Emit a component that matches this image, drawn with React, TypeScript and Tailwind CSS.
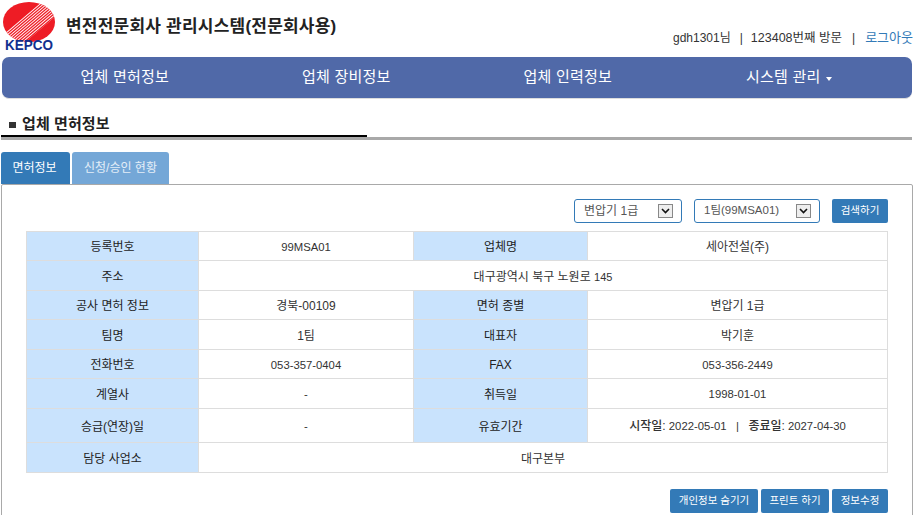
const font = "font-['Liberation_Sans','Noto_Sans_CJK_KR',sans-serif]";

const navItems = ["업체 면허정보", "업체 장비정보", "업체 인력정보", "시스템 관리"];

type Cell = { label: string; value: React.ReactNode; latin?: boolean };
type Row = { h: string; cells: Cell[] };

const rows: Row[] = [
  { h: "h-[29px]", cells: [{ label: "등록번호", value: "99MSA01", latin: true }, { label: "업체명", value: "세아전설(주)" }] },
  { h: "h-[30px]", cells: [{ label: "주소", value: <>대구광역시 북구 노원로 <span className="text-[11px]">145</span></> }] },
  { h: "h-[29px]", cells: [{ label: "공사 면허 정보", value: "경북-00109" }, { label: "면허 종별", value: "변압기 1급" }] },
  { h: "h-[30px]", cells: [{ label: "팀명", value: "1팀" }, { label: "대표자", value: "박기훈" }] },
  { h: "h-[29px]", cells: [{ label: "전화번호", value: "053-357-0404", latin: true }, { label: "FAX", value: "053-356-2449", latin: true }] },
  { h: "h-[30px]", cells: [{ label: "계열사", value: "-", latin: true }, { label: "취득일", value: "1998-01-01", latin: true }] },
  {
    h: "h-[34px]",
    cells: [
      { label: "승급(연장)일", value: "-", latin: true },
      {
        label: "유효기간",
        value: (
          <span className="relative -top-[1px] text-[11.3px]">
            <span className="text-[12px] font-medium">시작일:</span> 2022-05-01{"   |   "}
            <span className="text-[12px] font-medium">종료일:</span> 2027-04-30
          </span>
        ),
      },
    ],
  },
  { h: "h-[30px]", cells: [{ label: "담당 사업소", value: "대구본부" }] },
];

function Logo() {
  const stripes = [0, 1, 2, 3, 4, 5, 6, 7, 8];
  return (
    <svg width="54" height="52" viewBox="0 0 54 52" className="shrink-0">
      <defs>
        <clipPath id="disc">
          <ellipse cx="26" cy="20" rx="26" ry="20" />
        </clipPath>
      </defs>
      <ellipse cx="26" cy="20" rx="26" ry="20" fill="#ee1c25" />
      <g clipPath="url(#disc)">
        <path d="M0 33L60 -18L60 8L0 59Z" fill="#fff" />
        <g stroke="#ee1c25" strokeWidth="1.3">
          {stripes.map((i) => (
            <line key={i} x1={0} y1={35 + i * 2.9} x2={60} y2={-16 + i * 2.9} />
          ))}
        </g>
      </g>
      <text x="2" y="48" fill="#12308f" fontSize="15" fontWeight="700" fontFamily="Liberation Sans" textLength="48" lengthAdjust="spacingAndGlyphs">
        KEPCO
      </text>
    </svg>
  );
}

function SelectBox({ label, w, size }: { label: string; w: string; size: string }) {
  return (
    <div className={`${w} ${size} flex h-6 items-center justify-between rounded-[3px] border border-[#337ab7] pl-[9px] pr-[8px] text-[#555]`}>
      <span>{label}</span>
      <span className="flex h-[14px] w-[15px] items-center justify-center border border-[#888] bg-[#eee]">
        <svg width="9" height="6" viewBox="0 0 9 6">
          <path d="M1 1l3.5 3.5L8 1" fill="none" stroke="#111" strokeWidth="1.6" />
        </svg>
      </span>
    </div>
  );
}

function Btn({ children, w }: { children: string; w: string }) {
  return (
    <button className={`${w} flex h-6 items-center justify-center rounded-[2px] bg-[#337ab7] text-[10.5px] text-white`}>
      {children}
    </button>
  );
}

export default function App() {
  return (
    <div className={`${font} h-[515px] w-[915px] overflow-hidden bg-white text-[#333]`}>
      <header className="flex h-[57px] items-start pl-[3px] pr-[2px] pt-[2px]">
        <Logo />
        <h1 className="ml-[9px] mt-[15px] text-[17px] font-bold leading-5 tracking-[0.22px] text-[#222]">
          변전전문회사 관리시스템(전문회사용)
        </h1>
        <div className="ml-auto mt-[28px] flex text-[12px] leading-4">
          <span>gdh1301님</span>
          <span className="ml-[9px]">|</span>
          <span className="ml-[8px] text-[12.5px]">123408번째 방문</span>
          <span className="ml-[10px]">|</span>
          <span className="ml-[10px] text-[13px] text-[#337ab7]">로그아웃</span>
        </div>
      </header>

      <nav className="mx-[2px] grid h-[42px] w-[910px] grid-cols-4 rounded-[7px] border-b border-[#ddd] bg-[#5069a8] px-3 text-[15px] tracking-[0.2px] text-white">
        {navItems.map((item, i) => (
          <div key={item} className="flex items-center justify-center gap-[6px]">
            {item}
            {i === 3 && <span className="mt-[2px] border-x-[3.5px] border-t-[4px] border-x-transparent border-t-white" />}
          </div>
        ))}
      </nav>

      <div className="ml-[1px] mt-[14px] flex h-[24px] w-[366px] items-center border-b-2 border-black pl-[8px] text-[15px] font-bold tracking-[0.1px] text-[#222]">
        <span className="mr-[6px] mt-[2px] h-[6px] w-[7px] bg-[#333]" />
        업체 면허정보
      </div>
      <div className="mx-[1px] h-[3px] w-[911px] bg-[#a9a9a9]" />

      <div className="ml-[1px] mt-[12px] flex gap-[2px] text-[12px] text-white">
        <div className="flex h-[32px] w-[69px] items-center justify-center rounded-t-[3px] bg-[#337ab7] pr-[2px]">면허정보</div>
        <div className="flex h-[32px] w-[97px] items-center justify-center rounded-t-[3px] bg-[#74a7d7] text-[#e4eef8]">신청/승인 현황</div>
      </div>

      <section className="ml-[1px] h-[340px] w-[912px] rounded-[2px] border border-[#a9a9a9] px-[24px] pt-[14px]">
        <div className="flex w-[862px] justify-end gap-3">
          <SelectBox label="변압기 1급" w="w-[108px]" size="text-[12px]" />
          <SelectBox label="1팀(99MSA01)" w="w-[126px]" size="text-[11.5px]" />
          <Btn w="w-[56px]">검색하기</Btn>
        </div>

        <table className="mt-2 w-[861px] table-fixed border-collapse text-[12px]">
          <colgroup>
            <col className="w-[172px]" />
            <col className="w-[215px]" />
            <col className="w-[174px]" />
            <col className="w-[300px]" />
          </colgroup>
          <tbody>
            {rows.map((r) => (
              <tr key={r.cells[0].label} className={r.h}>
                {r.cells.flatMap((c) => [
                  <th key={c.label} className="border border-[#ddd] bg-[#c9e3fd] p-0 pt-[2px] text-center font-normal text-[#222]">
                    {c.label}
                  </th>,
                  <td
                    key={c.label + "v"}
                    colSpan={r.cells.length === 1 ? 3 : 1}
                    className={`${c.latin ? "text-[11.3px]" : ""} whitespace-pre border border-[#ddd] p-0 pt-[2px] text-center`}
                  >
                    {c.value}
                  </td>,
                ])}
              </tr>
            ))}
          </tbody>
        </table>

        <div className="mt-4 flex w-[862px] justify-end gap-[3px]">
          <Btn w="w-[88px]">개인정보 숨기기</Btn>
          <Btn w="w-[68px]">프린트 하기</Btn>
          <Btn w="w-[56px]">정보수정</Btn>
        </div>
      </section>
    </div>
  );
}
